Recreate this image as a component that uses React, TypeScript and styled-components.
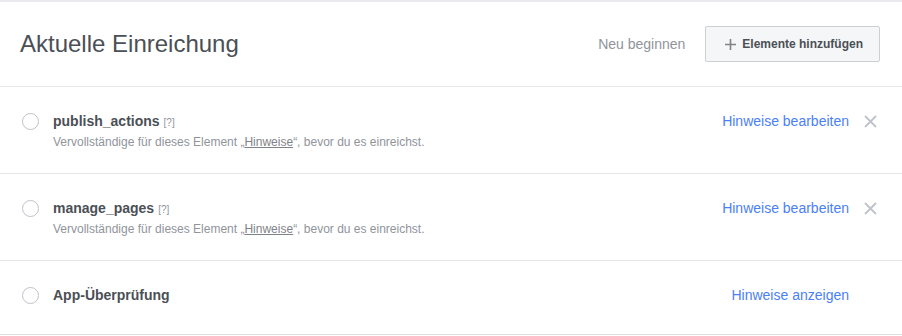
import styled, { createGlobalStyle } from "styled-components"

const GlobalStyle = createGlobalStyle`
    body {
        margin: 0;
        background: #fff;
        font-family: "Liberation Sans", Arial, sans-serif;
    }
`

const Panel = styled.div`
    width: 902px;
    border-top: 2px solid #e9eaed;
    border-bottom: 1px solid #dddfe2;
`

const Header = styled.div`
    height: 84px;
    display: flex;
    align-items: center;
    padding: 0 22px 0 20px;
    border-bottom: 1px solid #e5e6e9;
`

const Title = styled.h1`
    margin: 0;
    flex: 1;
    font-size: 24px;
    font-weight: normal;
    color: #4b4f56;
`

const TextButton = styled.span`
    font-size: 14px;
    color: #90949c;
    margin-right: 20px;
`

const AddButton = styled.button`
    height: 36px;
    padding: 0 16px 0 19px;
    display: flex;
    align-items: center;
    gap: 6px;
    background: #f5f6f7;
    border: 1px solid #ccd0d5;
    border-radius: 2px;
    font-family: inherit;
    font-size: 12px;
    font-weight: bold;
    color: #4b4f56;
`

const Row = styled.div<{ $tall?: boolean }>`
    height: ${(p) => (p.$tall ? "87px" : "73px")};
    box-sizing: border-box;
    display: flex;
    align-items: ${(p) => (p.$tall ? "flex-start" : "center")};
    padding: ${(p) => (p.$tall ? "26px 25px 0 22px" : "0 25px 5px 22px")};
    border-bottom: 1px solid #e5e6e9;

    &:last-child {
        border-bottom: none;
    }
`

const Radio = styled.span`
    width: 15px;
    height: 15px;
    border: 1.5px solid #bec2c9;
    border-radius: 50%;
    margin-right: 14px;
    flex-shrink: 0;
`

const Body = styled.div`
    flex: 1;
    display: flex;
    flex-direction: column;
    gap: 6px;
`

const ItemName = styled.div`
    font-size: 14px;
    font-weight: bold;
    color: #4b4f56;
`

const Hint = styled.span`
    font-size: 10px;
    font-weight: normal;
    color: #90949c;
    margin-left: 4px;
`

const Note = styled.div`
    font-size: 12px;
    color: #90949c;

    u {
        color: #7f8389;
    }
`

const Link = styled.a<{ $alone?: boolean }>`
    font-size: 14px;
    color: #4a80f7;
    text-decoration: none;
    margin-right: ${(p) => (p.$alone ? "28px" : "0")};
`

const Close = styled.span`
    margin-left: 15px;
    margin-top: 2px;
    display: flex;
`

const CloseIcon = () => (
    <svg width="13" height="13" viewBox="0 0 13 13">
        <path d="M1 1 L12 12 M12 1 L1 12" stroke="#bec2c9" strokeWidth="1.8" />
    </svg>
)

const PlusIcon = () => (
    <svg width="11" height="11" viewBox="0 0 11 11">
        <path d="M5.5 0 V11 M0 5.5 H11" stroke="#7f8389" strokeWidth="1.6" />
    </svg>
)

const items = [
    { name: "publish_actions" },
    { name: "manage_pages" },
]

const App = () => {
    return (
        <>
            <GlobalStyle />
            <Panel>
                <Header>
                    <Title>Aktuelle Einreichung</Title>
                    <TextButton>Neu beginnen</TextButton>
                    <AddButton>
                        <PlusIcon />
                        Elemente hinzufügen
                    </AddButton>
                </Header>
                {items.map((item) => (
                    <Row $tall key={item.name}>
                        <Radio />
                        <Body>
                            <ItemName>
                                {item.name}
                                <Hint>[?]</Hint>
                            </ItemName>
                            <Note>
                                Vervollständige für dieses Element „<u>Hinweise</u>“, bevor du es einreichst.
                            </Note>
                        </Body>
                        <Link>Hinweise bearbeiten</Link>
                        <Close>
                            <CloseIcon />
                        </Close>
                    </Row>
                ))}
                <Row>
                    <Radio />
                    <Body>
                        <ItemName>App-Überprüfung</ItemName>
                    </Body>
                    <Link $alone>Hinweise anzeigen</Link>
                </Row>
            </Panel>
        </>
    )
}

export default App
